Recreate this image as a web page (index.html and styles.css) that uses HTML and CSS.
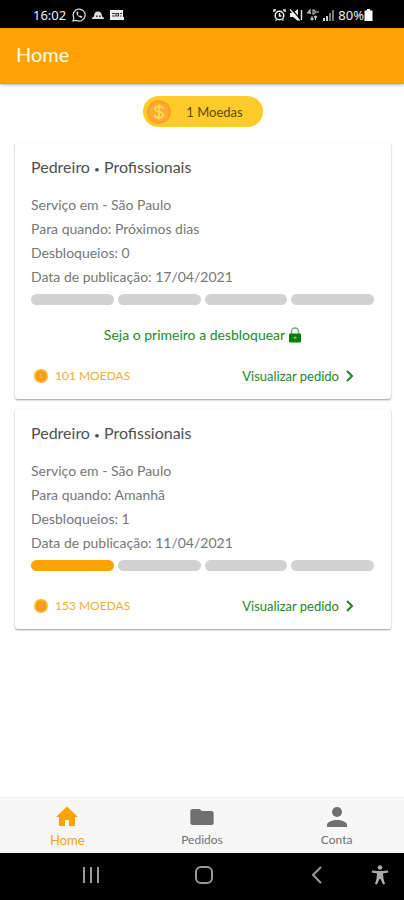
FILE: index.html
```
<!DOCTYPE html>
<html lang="pt-BR">
<head>
  <meta charset="UTF-8">
  <meta name="viewport" content="width=device-width, initial-scale=1">
  <title>Home</title>
  <link rel="stylesheet" href="styles.css">
</head>
<body>

<div class="status-bar">
  <div class="status-group">
    <span class="clock">16:02</span>
    <svg width="14" height="14" viewBox="0 0 14 14" fill="none" stroke="#ddd" stroke-width="1.2">
      <path d="M1 13l.9-3A6 6 0 1 1 4.200 12.300z"/>
      <path d="M4.500 4c-.5 2.500 2.500 6 5.500 5.700l.3-1.500-1.600-.7-.8.8C6.800 7.800 6 6.800 5.800 6l.7-.7-.6-1.700z" fill="#ddd" stroke="none"/>
    </svg>
    <svg width="12" height="14" viewBox="0 0 12 14" fill="#ddd">
      <path d="M0 11h12v-1l-2-1.500C10 5 8.500 3.500 6 3.500S2 5 2 8.500L0 10z"/>
      <path d="M4 7.500h1.500v1.500H4zM7 7.500h1.500v1.500H7z" fill="#333"/>
    </svg>
    <svg width="14" height="14" viewBox="0 0 14 14">
      <path d="M0 2h13v7h1v3H0z" fill="#eee"/>
      <path d="M2 5.500h3M2 8h3M6 5.500h2.500V8H6zM10 5.500h2M10 8h1.500" stroke="#333" stroke-width="1.100" fill="none"/>
    </svg>
  </div>
  <div class="status-group status-right">
    <svg width="13" height="14" viewBox="0 0 13 14" fill="none" stroke="#eee" stroke-width="1.500">
      <circle cx="6.500" cy="7.500" r="4.300"/>
      <path d="M1 4V2h2M12 4V2h-2M2.500 12.500l1-1M10.500 12.500l-1-1M6.500 5v3h2"/>
    </svg>
    <svg width="13" height="14" viewBox="0 0 13 14">
      <path d="M0 5h3l5-4v12L3 9H0z" fill="#eee"/>
      <path d="M1.500 1l9 10.500" stroke="#000" stroke-width="1.200"/>
      <path d="M0 1.500l9.500 11M11.500 2v10" stroke="#eee" stroke-width="1.400"/>
    </svg>
    <svg width="12" height="14" viewBox="0 0 12 14" fill="none" stroke="#ccc" stroke-width="1.100">
      <path d="M3 6V2L.5 5H4M6 2v4h1l1.500-2L7 2zM9 4h3"/>
      <path d="M5 8v4M3.500 10.500L5 12l1.500-1.500M8.500 12V8M7 9.500L8.500 8 10 9.500"/>
    </svg>
    <svg width="11" height="14" viewBox="0 0 11 14">
      <path d="M0 10h2v3H0zM3 8h2v5H3z" fill="#ccc"/>
      <path d="M6 5h2v8H6zM9 2h2v11H9z" fill="#777"/>
    </svg>
    <span class="battery">80%<svg width="9" height="14" viewBox="0 0 9 14" fill="#fff"><path d="M3 1h3v1.500h2.500V13h-8V2.500H3z"/></svg></span>
  </div>
</div>

<header class="header">
  <h1>Home</h1>
</header>

<main class="content">
  <button class="coins" type="button">
    <svg width="26" height="26" viewBox="0 0 26 26">
      <circle cx="13" cy="13" r="12" fill="#fda322"/>
      <circle cx="13" cy="13" r="9.500" fill="#fbac38"/>
      <path d="M17 9.500C16.500 8 15 7.300 13 7.300c-2.300 0-4 1-4 2.800 0 4 8.200 1.700 8.200 5.600 0 2-1.900 3-4.200 3s-4-.9-4.400-2.700M13 5.500v15" fill="none" stroke="#ffe04a" stroke-width="1.700"/>
    </svg>
    <span>1 Moedas</span>
  </button>

  <article class="card">
    <h2>Pedreiro <span class="dot">•</span> Profissionais</h2>
    <ul class="details">
      <li>Serviço em - São Paulo</li>
      <li>Para quando: Próximos dias</li>
      <li>Desbloqueios: 0</li>
      <li>Data de publicação: 17/04/2021</li>
    </ul>
    <div class="steps">
      <span class="step"></span>
      <span class="step"></span>
      <span class="step"></span>
      <span class="step"></span>
    </div>
    <p class="unlock">
      Seja o primeiro a desbloquear
      <svg width="12" height="16" viewBox="0 0 12 16">
        <path d="M2.500 7V4.500a3.500 3.500 0 0 1 7 0V7" fill="none" stroke="#6cae6c" stroke-width="1.400"/>
        <rect y="6.500" width="12" height="9" rx="1" fill="#087f08"/>
        <path d="M4.500 10.500h3M6 9.500v2.500" stroke="#8fc98f"/>
      </svg>
    </p>
    <div class="card-footer">
      <span class="price">
        <svg width="14" height="14" viewBox="0 0 14 14">
          <circle cx="7" cy="7" r="7" fill="#fcb62c"/>
          <circle cx="7" cy="7" r="5.200" fill="#f99a12"/>
          <path d="M8.500 5.300C7 4.300 5.500 5 5.800 6.200c.3 1 2.500.7 2.500 1.900 0 1.100-1.800 1.400-2.900.5" fill="none" stroke="#fcbc4b"/>
        </svg>
        101 MOEDAS
      </span>
      <a class="view" href="#">Visualizar pedido
        <svg width="8" height="12" viewBox="0 0 8 12" fill="none" stroke="#1b861b" stroke-width="2"><path d="M1 1l5 5-5 5"/></svg>
      </a>
    </div>
  </article>

  <article class="card">
    <h2>Pedreiro <span class="dot">•</span> Profissionais</h2>
    <ul class="details">
      <li>Serviço em - São Paulo</li>
      <li>Para quando: Amanhã</li>
      <li>Desbloqueios: 1</li>
      <li>Data de publicação: 11/04/2021</li>
    </ul>
    <div class="steps">
      <span class="step done"></span>
      <span class="step"></span>
      <span class="step"></span>
      <span class="step"></span>
    </div>
    <div class="card-footer">
      <span class="price">
        <svg width="14" height="14" viewBox="0 0 14 14">
          <circle cx="7" cy="7" r="7" fill="#fcb62c"/>
          <circle cx="7" cy="7" r="5.200" fill="#f99a12"/>
          <path d="M8.500 5.300C7 4.300 5.500 5 5.800 6.200c.3 1 2.500.7 2.500 1.900 0 1.100-1.800 1.400-2.900.5" fill="none" stroke="#fcbc4b"/>
        </svg>
        153 MOEDAS
      </span>
      <a class="view" href="#">Visualizar pedido
        <svg width="8" height="12" viewBox="0 0 8 12" fill="none" stroke="#1b861b" stroke-width="2"><path d="M1 1l5 5-5 5"/></svg>
      </a>
    </div>
  </article>
</main>

<nav class="tabs">
  <a class="tab active" href="#">
    <svg width="24" height="24" viewBox="0 0 24 24" fill="currentColor"><path d="M10 21v-6h4v6h6v-9h3L12 1.500 1 12h3v9z"/></svg>
    Home
  </a>
  <a class="tab" href="#">
    <svg width="28" height="24" viewBox="0 0 24 24" preserveAspectRatio="none" fill="currentColor"><path d="M10 4H4a2 2 0 0 0-2 2v12a2 2 0 0 0 2 2h16a2 2 0 0 0 2-2V8a2 2 0 0 0-2-2h-8z"/></svg>
    Pedidos
  </a>
  <a class="tab" href="#">
    <svg width="24" height="24" viewBox="0 0 24 24" fill="currentColor"><circle cx="12" cy="7" r="5"/><path d="M2 22v-2c0-3.500 6-5 10-5s10 1.500 10 5v2z"/></svg>
    Conta
  </a>
</nav>

<div class="system-nav">
  <button type="button" aria-label="Recentes">
    <svg width="18" height="18" viewBox="0 0 18 18" stroke="#999" stroke-width="2"><path d="M2 1v16M9 1v16M16 1v16"/></svg>
  </button>
  <button type="button" aria-label="Início">
    <svg width="18" height="18" viewBox="0 0 18 18" fill="none" stroke="#999" stroke-width="2"><rect x="1" y="1" width="16" height="16" rx="5"/></svg>
  </button>
  <button type="button" aria-label="Voltar">
    <svg width="18" height="18" viewBox="0 0 18 18" fill="none" stroke="#999" stroke-width="2"><path d="M13 1L5 9l8 8"/></svg>
  </button>
  <button type="button" aria-label="Acessibilidade">
    <svg width="18" height="20" viewBox="0 0 18 20" fill="#aaa"><circle cx="9" cy="2.500" r="2.300"/><path d="M1 5.500l5 .6h6l5-.6.3 2L12 8.500l.5 5 1.500 5.500-2 .6L9.500 14h-1L6 19.600l-2-.6 1.500-5.500.5-5-5.300-1z"/></svg>
  </button>
</div>

</body>
</html>
```
FILE: styles.css
```
* {
  box-sizing: border-box;
}
body {
  display: flex;
  flex-direction: column;
  min-height: 100vh;
  margin: 0;
  background: #fff;
  color: #777;
  font-family: Lato, sans-serif;
  font-size: 14px;
}
h1, h2, p, ul {
  margin: 0;
  padding: 0;
  font-weight: 400;
}
svg {
  flex: none;
}
button {
  padding: 0;
  border: none;
  font-family: inherit;
  cursor: pointer;
}
a {
  text-decoration: none;
}
.status-bar {
  display: flex;
  justify-content: space-between;
  align-items: center;
  height: 28px;
  padding: 2px 31px 0 33px;
  background: #000;
  color: #eee;
}
.status-group {
  display: flex;
  align-items: center;
  gap: 6px;
}
.status-right {
  gap: 4px;
}
.clock,
.battery {
  font-family: "Noto Sans", sans-serif;
  font-size: 13px;
}
.battery {
  display: flex;
  align-items: center;
}
.header {
  display: flex;
  align-items: center;
  height: 56px;
  padding: 0 16px 4px;
  background: #ffa305;
  color: #fffbe6;
  box-shadow: 0 1px 3px rgba(0,0,0,0.3);
}
.header h1 {
  font-size: 20px;
}
.content {
  display: flex;
  flex-direction: column;
  flex: 1;
  gap: 10px;
  padding: 12px 13px 16px 15px;
}
.coins {
  display: flex;
  align-items: center;
  align-self: center;
  gap: 14px;
  height: 31px;
  margin-bottom: 6px;
  padding: 0 20px 0 3px;
  border-radius: 16px;
  background: #fecb2a;
  color: #5c4a17;
  font-size: 13px;
}
.card {
  padding: 12px 17px 11px 16px;
  border-radius: 3px;
  background: #fff;
  box-shadow: 0 1px 2px rgba(0,0,0,0.4);
}
.card h2 {
  color: #505050;
  font-size: 16px;
  line-height: 24px;
}
.dot {
  font-size: 10px;
  line-height: 1;
}
.details {
  margin: 14px 0 5px;
  list-style: none;
  line-height: 24px;
}
.steps {
  display: grid;
  grid-template-columns: repeat(4, 1fr);
  gap: 4px;
}
.step {
  height: 11px;
  border-radius: 6px;
  background: #d2d2d2;
}
.step.done {
  background: #ffa305;
}
.unlock {
  display: flex;
  justify-content: center;
  align-items: center;
  gap: 4px;
  margin: 18px 0 -6px;
  color: #248a24;
  line-height: 24px;
}
.card-footer {
  display: flex;
  justify-content: space-between;
  align-items: center;
  margin-top: 23px;
  padding: 0 20px 0 3px;
  line-height: 24px;
}
.price,
.view {
  display: flex;
  align-items: center;
  gap: 7px;
}
.price {
  color: #f0ae3a;
  font-size: 12px;
}
.view {
  color: #248a24;
  font-size: 13px;
}
.tabs {
  display: grid;
  grid-template-columns: repeat(3, 1fr);
  height: 56px;
  border-top: 1px solid #eee;
  background: #f7f7f7;
}
.tab {
  display: flex;
  flex-direction: column;
  align-items: center;
  padding-top: 7px;
  color: #707070;
  font-size: 12px;
  line-height: 22px;
}
.tab.active {
  color: #ffa305;
  font-size: 13px;
}
.system-nav {
  display: grid;
  grid-template-columns: 78fr 148fr 78fr 48fr;
  align-items: center;
  height: 47px;
  padding-left: 13%;
  background: #000;
}
.system-nav button {
  background: none;
}
```
